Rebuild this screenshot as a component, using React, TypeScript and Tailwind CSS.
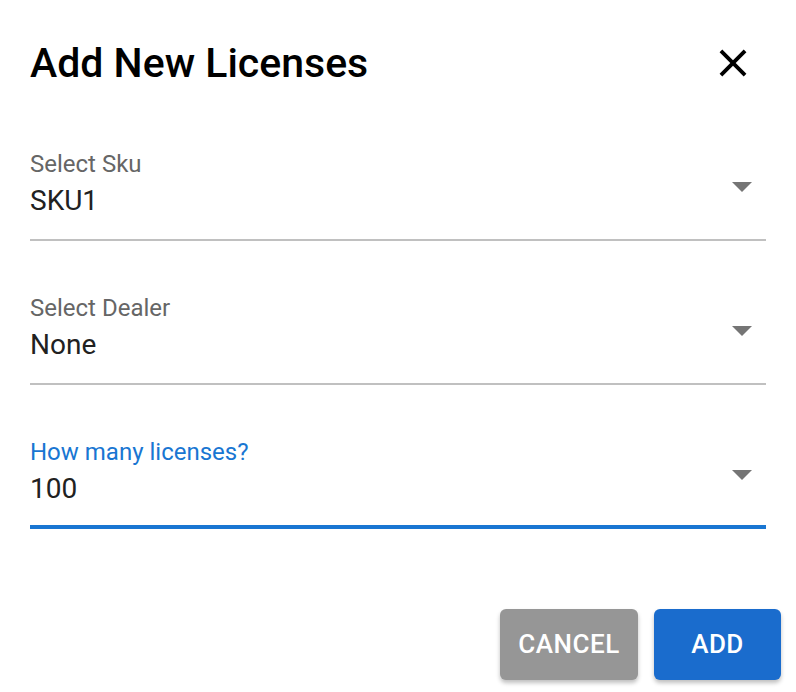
function DropArrow() {
  return (
    <svg width="48" height="48" viewBox="0 0 24 24" className="text-[#757575] shrink-0" fill="currentColor">
      <path d="M7 10l5 5 5-5z" />
    </svg>
  )
}

function Field({ label, value, focused }: { label: string; value: string; focused?: boolean }) {
  return (
    <div className="flex flex-col">
      <div className="flex items-center justify-between">
        <div className="flex flex-col">
          <div className={`text-[24px] leading-[24px] ${focused ? 'text-[#1976d2]' : 'text-[#666666]'}`}>{label}</div>
          <div className="flex items-center h-[38px] mt-[6px]">
            <span className="text-[28px] leading-[32px] text-[#212121]">{value}</span>
          </div>
        </div>
        <DropArrow />
      </div>
      <div className={focused ? 'mt-[17px] h-[4px] bg-[#1976d2]' : 'mt-[19px] h-[2px] bg-[#c0c0c0]'} />
    </div>
  )
}

export default function App() {
  return (
    <div className="w-[796px] h-[692px] bg-white font-['Roboto',sans-serif] flex flex-col">
      {/* Title */}
      <div className="flex items-center justify-between pl-[30px] pr-[30px] pt-[30px] h-[96px]">
        <h1 className="text-[41px] leading-[64px] font-medium text-black">Add New Licenses</h1>
        <svg width="46" height="46" viewBox="0 0 24 24" fill="currentColor" className="text-black mr-[10px]">
          <path d="M19 6.41L17.59 5 12 10.59 6.41 5 5 6.41 10.59 12 5 17.59 6.41 19 12 13.41 17.59 19 19 17.59 13.41 12z" />
        </svg>
      </div>

      {/* Fields */}
      <div className="flex flex-col gap-[55px] px-[30px] pt-[56px]">
        <Field label="Select Sku" value="SKU1" />
        <Field label="Select Dealer" value="None" />
        <Field label="How many licenses?" value="100" focused />
      </div>

      {/* Actions */}
      <div className="flex-1" />
      <div className="flex justify-end gap-[16px] pr-[15px] pb-[12px]">
        <button className="h-[71px] w-[138px] rounded-[6px] bg-[#969696] text-white text-[26px] font-medium tracking-[0.5px] shadow-[0_3px_4px_rgba(0,0,0,0.25)]">
          CANCEL
        </button>
        <button className="h-[71px] w-[127px] rounded-[6px] bg-[#1a6ccd] text-white text-[26px] font-medium tracking-[0.5px] shadow-[0_3px_4px_rgba(0,0,0,0.25)]">
          ADD
        </button>
      </div>
    </div>
  )
}
